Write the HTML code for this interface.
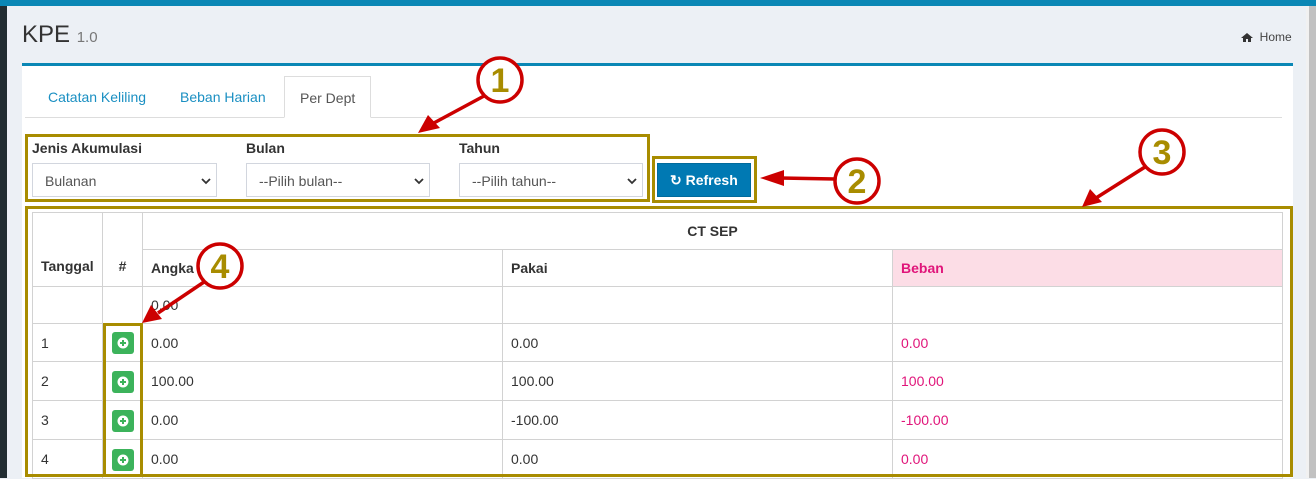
<!DOCTYPE html>
<html><head><meta charset="utf-8"><style>
*{box-sizing:border-box;margin:0;padding:0}
body{width:1316px;height:478px;overflow:hidden;background:#ecf0f5;font-family:"Liberation Sans",sans-serif;font-size:14px;color:#333;position:relative}
.a{position:absolute}
.sel{position:absolute;height:34px;border:1px solid #d2d6de;background:#fff;color:#555;font-size:14px;padding:9px 0 0 12px}
.sel svg{position:absolute;right:4px;top:12px}
table{position:absolute;left:32px;top:212px;border-collapse:collapse;width:1251px;font-size:14px}
td{border:1px solid #d2d2d2;padding:0 8px;vertical-align:middle}
th{border:1px solid #d2d2d2;font-weight:bold;text-align:left;padding:0 8px}
.g{display:inline-block;width:22px;height:22px;background:#3cb35b;border-radius:3px;position:relative;top:2px}
.g svg{position:absolute;left:5px;top:5px}
.p{color:#e0157a}
</style></head><body>
<div class="a" style="left:0;top:0;width:1316px;height:6px;background:#0a87b5"></div>
<div class="a" style="left:0;top:6px;width:7px;height:472px;background:#222d32"></div>
<div class="a" style="left:1306px;top:6px;width:10px;height:472px;background:#f1f1f1"></div>
<div class="a" style="left:1309px;top:6px;width:7px;height:472px;background:#c1c1c1"></div>
<div class="a" style="left:22px;top:21px;font-size:24px;color:#333">KPE <span style="font-size:15px;color:#777">1.0</span></div>
<div class="a" style="left:1241px;top:30px;font-size:12px;color:#444"><svg width="12" height="10" style="vertical-align:-1px"><path d="M0 6L6 1 12 6 10 6 10 10 7 10 7 7 5 7 5 10 2 10 2 6Z" fill="#333"/></svg>&nbsp; Home</div>
<div class="a" style="left:22px;top:63px;width:1271px;height:415px;background:#fff;border-top:3px solid #0a87b5"></div>
<div class="a" style="left:25px;top:117px;width:1257px;height:1px;background:#ddd"></div>
<div class="a" style="left:48px;top:89px;color:#1a8fc2">Catatan Keliling</div>
<div class="a" style="left:180px;top:89px;color:#1a8fc2">Beban Harian</div>
<div class="a" style="left:284px;top:76px;width:87px;height:42px;border:1px solid #ddd;border-bottom:1px solid #fff;background:#fff;color:#555;padding:13px 0 0 15px">Per Dept</div>
<div class="a" style="left:32px;top:140px;font-weight:bold">Jenis Akumulasi</div>
<div class="a" style="left:246px;top:140px;font-weight:bold">Bulan</div>
<div class="a" style="left:459px;top:140px;font-weight:bold">Tahun</div>
<div class="sel" style="left:32px;top:163px;width:185px">Bulanan<svg width="12" height="10"><path d="M2 3l4 4 4-4" stroke="#333" stroke-width="1.8" fill="none"/></svg></div>
<div class="sel" style="left:246px;top:163px;width:184px">--Pilih bulan--<svg width="12" height="10"><path d="M2 3l4 4 4-4" stroke="#333" stroke-width="1.8" fill="none"/></svg></div>
<div class="sel" style="left:459px;top:163px;width:184px">--Pilih tahun--<svg width="12" height="10"><path d="M2 3l4 4 4-4" stroke="#333" stroke-width="1.8" fill="none"/></svg></div>
<div class="a" style="left:657px;top:163px;width:94px;height:34px;background:#0079b3;border:1px solid #006a9c;color:#fff;font-weight:bold;padding:8px 0 0 12px">&#8635; Refresh</div>
<table>
<tr style="height:37px"><th rowspan="2" style="width:70px;vertical-align:bottom;padding-bottom:12px">Tanggal</th><th rowspan="2" style="width:40px;text-align:center;vertical-align:bottom;padding-bottom:12px">#</th><th colspan="3" style="text-align:center">CT SEP</th></tr>
<tr style="height:37px"><th style="width:360px">Angka</th><th style="width:390px">Pakai</th><th class="p" style="background:#fcdde6">Beban</th></tr>
<tr style="height:37px"><td></td><td></td><td>0.00</td><td></td><td></td></tr>
<tr style="height:38px"><td>1</td><td style="text-align:center;padding:0"><span class="g"><svg width="12" height="12"><circle cx="6" cy="6" r="5.5" fill="#fff"/><path d="M6 3v6M3 6h6" stroke="#3cb35b" stroke-width="2"/></svg></span></td><td>0.00</td><td>0.00</td><td class="p">0.00</td></tr>
<tr style="height:39px"><td>2</td><td style="text-align:center;padding:0"><span class="g"><svg width="12" height="12"><circle cx="6" cy="6" r="5.5" fill="#fff"/><path d="M6 3v6M3 6h6" stroke="#3cb35b" stroke-width="2"/></svg></span></td><td>100.00</td><td>100.00</td><td class="p">100.00</td></tr>
<tr style="height:39px"><td>3</td><td style="text-align:center;padding:0"><span class="g"><svg width="12" height="12"><circle cx="6" cy="6" r="5.5" fill="#fff"/><path d="M6 3v6M3 6h6" stroke="#3cb35b" stroke-width="2"/></svg></span></td><td>0.00</td><td>-100.00</td><td class="p">-100.00</td></tr>
<tr style="height:39px"><td>4</td><td style="text-align:center;padding:0"><span class="g"><svg width="12" height="12"><circle cx="6" cy="6" r="5.5" fill="#fff"/><path d="M6 3v6M3 6h6" stroke="#3cb35b" stroke-width="2"/></svg></span></td><td>0.00</td><td>0.00</td><td class="p">0.00</td></tr>
</table>
<svg class="a" style="left:0;top:0" width="1316" height="478">
<g fill="none" stroke="#a88c00" stroke-width="3">
<rect x="26.5" y="135.5" width="622" height="65"/>
<rect x="653.5" y="157.5" width="102" height="44"/>
<rect x="26.5" y="207.5" width="1265" height="268"/>
<rect x="104.5" y="324.5" width="37" height="151"/>
</g>
<g stroke="#cc0000" stroke-width="3.5" fill="#cc0000">
<line x1="484" y1="96" x2="432" y2="124"/><polygon points="418,133 428,115 440,128" stroke="none"/>
<line x1="835" y1="179" x2="780" y2="178"/><polygon points="760,178 784,170 784,186" stroke="none"/>
<line x1="1145" y1="167" x2="1096" y2="198"/><polygon points="1082,207 1090,189 1102,202" stroke="none"/>
<line x1="204" y1="282" x2="158" y2="313"/><polygon points="142,323 151,305 162,319" stroke="none"/>
</g>
<g fill="#fff" stroke="#cc0000" stroke-width="3.5">
<circle cx="500" cy="80" r="22"/><circle cx="857" cy="181" r="22"/><circle cx="1162" cy="152" r="22"/><circle cx="220" cy="266" r="22"/>
</g>
<g fill="#a88c00" font-family="Liberation Sans" font-weight="bold" font-size="34" text-anchor="middle">
<text x="500" y="92">1</text><text x="857" y="193">2</text><text x="1162" y="164">3</text><text x="220" y="278">4</text>
</g>
</svg>
</body></html>
